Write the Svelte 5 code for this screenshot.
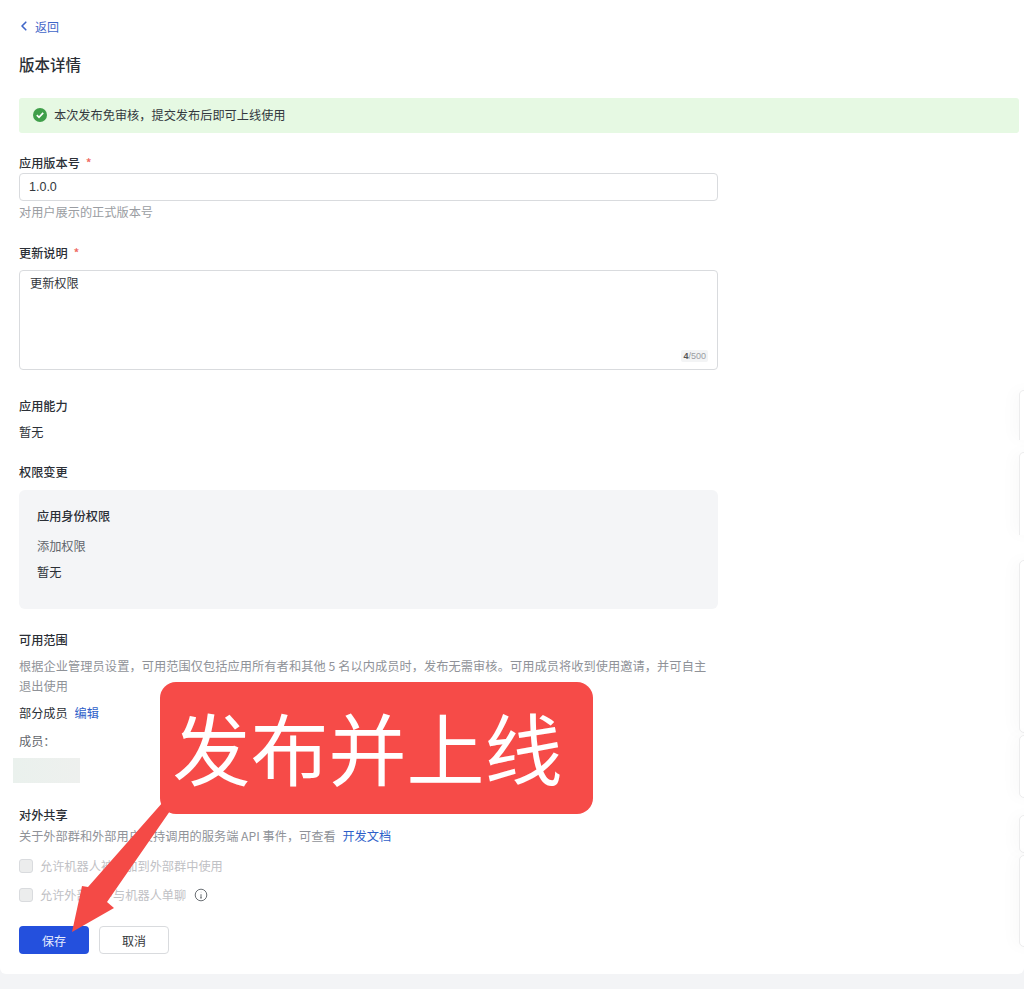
<script lang="ts">
  const rightCards = [
    { top: 390, height: 50, open: true },
    { top: 452, height: 83, open: true },
    { top: 560, height: 173, open: false },
    { top: 735, height: 63, open: false },
    { top: 815, height: 38, open: false },
    { top: 855, height: 92, open: false }
  ];
</script>

<div class="page">
  <main class="panel">
    <a class="back" href="#back">
      <svg width="10" height="10" viewBox="0 0 10 10" fill="none" stroke="currentColor" stroke-width="1.6" stroke-linecap="round" stroke-linejoin="round">
        <path d="M6.8 1.2 3 5l3.8 3.8" />
      </svg>
      返回
    </a>
    <h1>版本详情</h1>

    <div class="notice">
      <svg width="14" height="14" viewBox="0 0 14 14">
        <circle cx="7" cy="7" r="7" fill="#3f9f4a" />
        <path d="M3.8 7.2 6 9.3l4.2-4.4" fill="none" stroke="#fff" stroke-width="1.7" />
      </svg>
      本次发布免审核，提交发布后即可上线使用
    </div>

    <section class="form">
      <div class="label version-label">应用版本号 <span class="req">*</span></div>
      <div class="input">1.0.0</div>
      <div class="hint">对用户展示的正式版本号</div>

      <div class="label notes-label">更新说明 <span class="req">*</span></div>
      <div class="textarea">
        更新权限
        <span class="counter"><b>4</b>/500</span>
      </div>

      <div class="label ability-label">应用能力</div>
      <div class="value">暂无</div>

      <div class="label scope-label">权限变更</div>
      <div class="scope-box">
        <div class="scope-title">应用身份权限</div>
        <div class="scope-sub">添加权限</div>
        <div class="scope-none">暂无</div>
      </div>

      <div class="label range-label">可用范围</div>
      <p class="desc">根据企业管理员设置，可用范围仅包括应用所有者和其他 5 名以内成员时，发布无需审核。可用成员将收到使用邀请，并可自主退出使用</p>
      <div class="members">部分成员 <a href="#edit">编辑</a></div>
      <div class="members-label">成员：</div>
      <div class="member-chip"></div>

      <div class="label share-label">对外共享</div>
      <p class="share-desc">关于外部群和外部用户支持调用的服务端 API 事件，可查看 <a href="#docs">开发文档</a></p>
      <label class="check first"><span class="box"></span>允许机器人被添加到外部群中使用</label>
      <label class="check"><span class="box"></span>允许外部用户与机器人单聊
        <svg class="info" width="14" height="14" viewBox="0 0 14 14" fill="none" stroke="#6b7075" stroke-width="1">
          <circle cx="7" cy="7" r="5.8" />
          <path d="M7 6.2v3.6M6 9.9h2M6.9 4.2h.3" />
        </svg>
      </label>

      <div class="actions">
        <button class="primary">保存</button>
        <button class="ghost">取消</button>
      </div>
    </section>
  </main>

  {#each rightCards as card}
    <div class="side-card" class:open={card.open} style="top: {card.top}px; height: {card.height}px"></div>
  {/each}

  <svg class="arrow" width="1024" height="989" viewBox="0 0 1024 989">
    <path d="M163 802 88 887 82 886 72 932 114 908 107 902 170 811Z" fill="#f44a46" />
  </svg>
  <div class="callout">发布并上线</div>
</div>

<style>
  :global(body) {
    margin: 0;
    background: #f3f4f6;
  }

  .page {
    position: relative;
    width: 1024px;
    height: 989px;
    overflow: hidden;
    font-family: "Noto Sans CJK SC", "Liberation Sans", sans-serif;
    font-size: 12.2px;
    color: #2b2f36;
  }

  .panel {
    box-sizing: border-box;
    height: 974px;
    padding: 18px 5px 0 19px;
    background: #fff;
    border-radius: 0 0 6px 6px;
  }

  .back {
    display: flex;
    align-items: center;
    gap: 6px;
    height: 16px;
    margin-left: 0;
    color: #3f66c8;
    text-decoration: none;
    font-size: 12px;
  }

  h1 {
    margin: 18px 0 0;
    font-size: 15.5px;
    line-height: 24px;
    font-weight: 500;
  }

  .notice {
    display: flex;
    align-items: center;
    gap: 7px;
    box-sizing: border-box;
    height: 35px;
    margin-top: 22px;
    padding: 0 0 1px 14px;
    background: #e6f9e3;
    border-radius: 3px;
    color: #33383e;
  }

  .form {
    width: 699px;
  }

  .label {
    font-weight: 500;
    line-height: 18px;
  }

  .req {
    color: #ef6a62;
    margin-left: 3px;
  }

  .version-label { margin-top: 21px; }
  .notes-label { margin-top: 23px; }
  .ability-label { margin-top: 27px; }
  .scope-label { margin-top: 22px; }
  .range-label { margin-top: 22px; }
  .share-label { margin-top: 23px; }

  .input {
    box-sizing: border-box;
    height: 28px;
    margin-top: 1px;
    padding: 0 9px;
    border: 1px solid #d9dbde;
    border-radius: 4px;
    line-height: 27px;
    color: #33373c;
    font-family: "Liberation Sans", sans-serif;
    font-size: 12.5px;
  }

  .hint {
    margin-top: 2px;
    color: #9a9da2;
    line-height: 18px;
  }

  .textarea {
    position: relative;
    box-sizing: border-box;
    height: 100px;
    margin-top: 8px;
    padding: 3px 10px;
    border: 1px solid #d9dbde;
    border-radius: 4px;
    line-height: 18px;
    color: #33373c;
  }

  .counter {
    position: absolute;
    right: 9px;
    bottom: 7px;
    padding: 0 2px;
    background: #f3f4f5;
    border-radius: 2px;
    color: #9a9da2;
    font-family: "Liberation Sans", sans-serif;
    font-size: 9px;
    line-height: 12px;
  }

  .counter b {
    color: #555;
  }

  .value {
    margin-top: 8px;
    line-height: 18px;
  }

  .scope-box {
    box-sizing: border-box;
    height: 119px;
    margin-top: 9px;
    padding: 17px 18px;
    background: #f4f5f7;
    border-radius: 6px;
  }

  .scope-title {
    font-weight: 500;
    line-height: 18px;
  }

  .scope-sub {
    margin-top: 12px;
    line-height: 18px;
    color: #62666c;
  }

  .scope-none {
    margin-top: 8px;
    line-height: 18px;
  }

  .desc {
    width: 692px;
    margin: 7px 0 0;
    color: #8f9298;
    line-height: 20px;
    letter-spacing: 0.08px;
  }

  .members {
    margin-top: 8px;
    line-height: 18px;
  }

  a {
    color: #2f5fc9;
    text-decoration: none;
    margin-left: 4px;
  }

  .members-label {
    margin-top: 10px;
    line-height: 18px;
    color: #62666c;
  }

  .member-chip {
    width: 67px;
    height: 25px;
    margin: 8px 0 0 -6px;
    background: linear-gradient(90deg, #eaf1ed, #eef0ee);
  }

  .share-desc {
    margin: 3px 0 0;
    color: #8f9298;
    line-height: 18px;
  }

  .check {
    display: flex;
    align-items: center;
    gap: 7px;
    height: 18px;
    color: #bfc1c5;
    margin-top: 11px;
  }

  .check.first {
    margin-top: 12px;
  }

  .box {
    box-sizing: border-box;
    width: 14px;
    height: 14px;
    background: #eceded;
    border: 1px solid #d9dbde;
    border-radius: 3px;
  }

  .info {
    margin-left: 1px;
  }

  .actions {
    display: flex;
    gap: 10px;
    margin-top: 22px;
  }

  button {
    box-sizing: border-box;
    width: 70px;
    height: 28px;
    border-radius: 4px;
    font-family: inherit;
    font-size: 12px;
  }

  .primary {
    background: #2450dd;
    border: none;
    color: #e8edff;
  }

  .ghost {
    background: #fff;
    border: 1px solid #d9dbde;
    color: #33373c;
  }

  .side-card {
    position: absolute;
    left: 1019px;
    width: 30px;
    box-sizing: border-box;
    border: 1px solid #ececed;
    border-radius: 5px;
    background: #fff;
    box-shadow: -6px 0 16px rgba(0, 0, 0, 0.025);
  }

  .side-card.open {
    border-bottom: none;
    border-radius: 5px 5px 0 0;
  }

  .arrow {
    position: absolute;
    inset: 0;
    pointer-events: none;
  }

  .callout {
    position: absolute;
    left: 160px;
    top: 682px;
    box-sizing: border-box;
    width: 433px;
    height: 132px;
    padding-right: 18px;
    border-radius: 16px;
    background: #f64b48;
    color: #fff;
    font-size: 78px;
    font-family: "Noto Sans CJK SC", sans-serif;
    font-weight: 400;
    line-height: 128px;
    text-align: center;
  }
</style>
